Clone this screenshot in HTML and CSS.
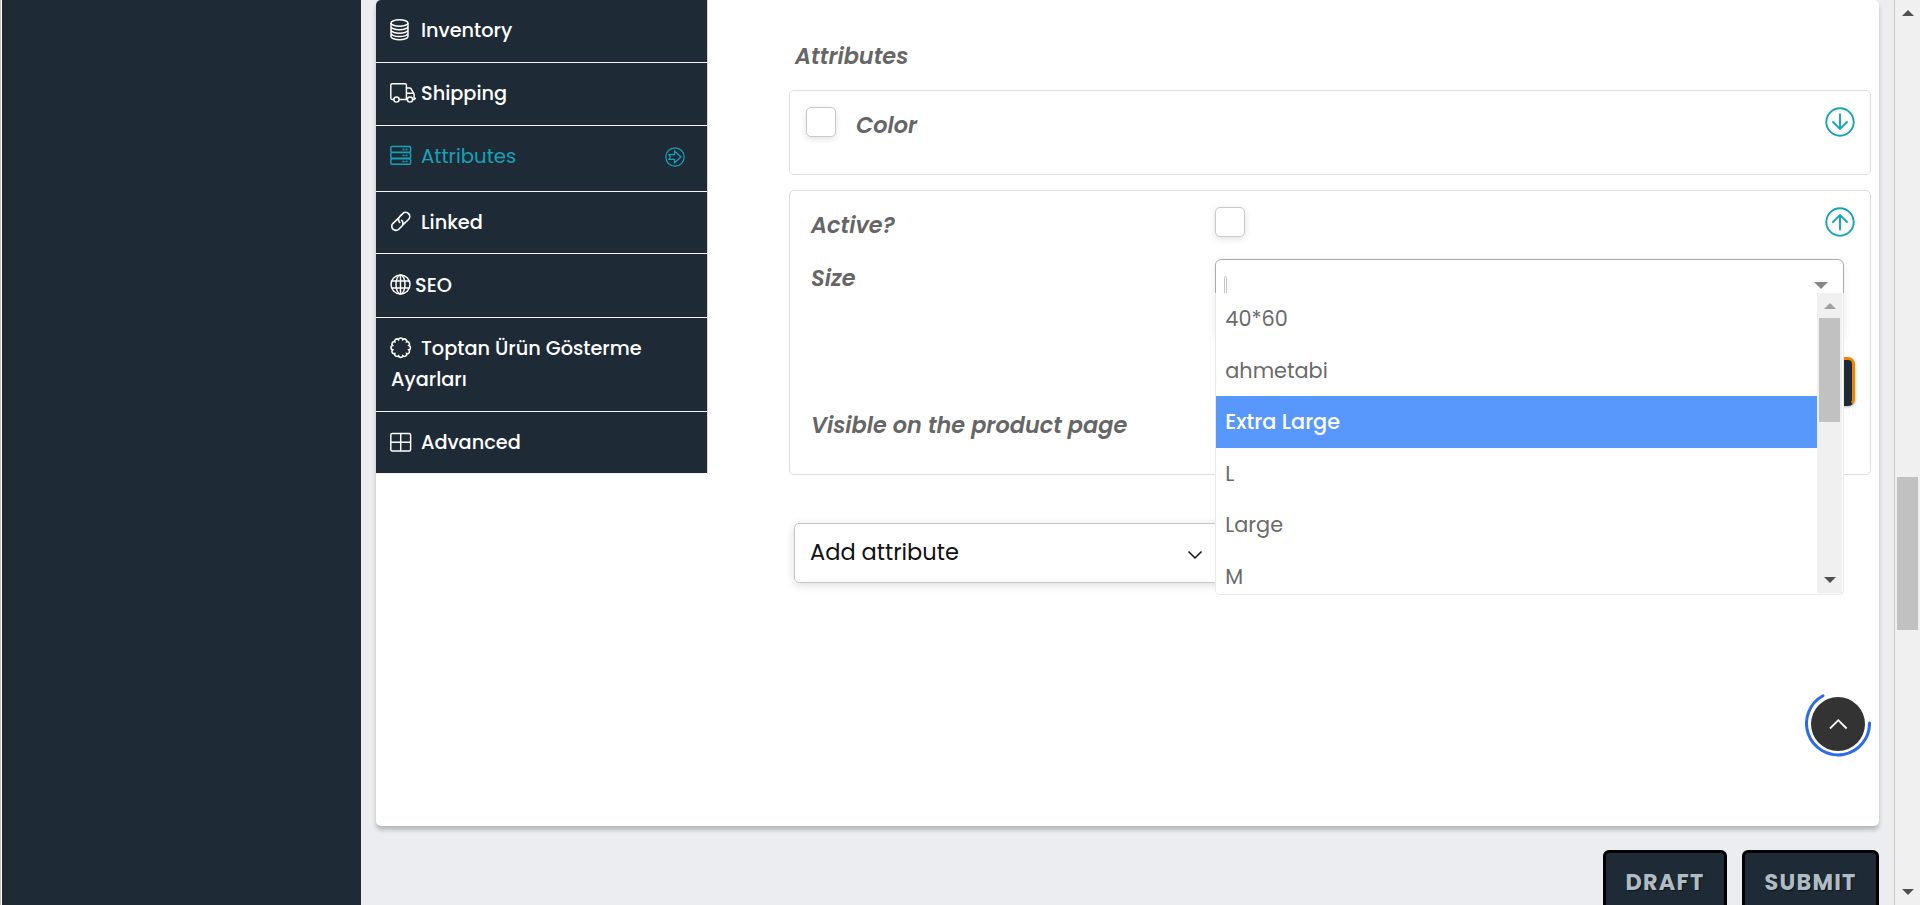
FILE: index.html
```
<!DOCTYPE html>
<html lang="en">
<head>
<meta charset="utf-8">
<title>Product attributes</title>
<link rel="stylesheet" href="styles.css">
</head>
<body>
<div class="app">
  <aside class="sidebar"></aside>
  <main class="page">
    <section class="card">
      <nav class="tabs">
        <a class="tab"><svg class="ico" viewBox="0 0 22 22"><ellipse cx="9.500" cy="4" rx="8.500" ry="3.200"/><path d="M1 4v13.500c0 1.800 3.800 3.200 8.500 3.200s8.500-1.400 8.500-3.200V4M1 7.500c0 1.800 3.800 3.200 8.500 3.200S18 9.300 18 7.500M1 11c0 1.800 3.800 3.200 8.500 3.200S18 12.800 18 11M1 14.300c0 1.800 3.800 3.200 8.500 3.200s8.500-1.400 8.500-3.200"/></svg><span>Inventory</span></a>
        <a class="tab"><svg class="ico truck" viewBox="0 0 26 22"><path d="M4 17.500H2.200A1.500 1.500 0 0 1 .8 16V3.200C.8 2.300 1.300 1.700 2.200 1.700H15c.9 0 1.400.6 1.400 1.500v14.300H9M16.400 6h3.300c.7 0 1 .3 1.400.8l2.600 4.400c.3.400.4.800.4 1.300v5h-2M16.400 11.200h7.200M16.400 17.500h1.200M24 16.500h2"/><circle cx="6.500" cy="17.500" r="2.600"/><circle cx="20" cy="17.500" r="2.600"/></svg><span>Shipping</span></a>
        <a class="tab tall active"><svg class="ico" viewBox="0 0 22 22"><rect x=".8" y="1.500" width="19.800" height="5.600" rx="1.200"/><rect x=".8" y="7.600" width="19.800" height="5.600" rx="1.200"/><rect x=".8" y="13.700" width="19.800" height="5.600" rx="1.200"/><path d="M12.500 4.500h2M15.500 4.500h2M12.500 10.500h2M15.500 10.500h2M12.500 16.500h2M15.500 16.500h2"/></svg><span>Attributes</span><svg class="go" viewBox="0 0 20 20"><circle cx="10" cy="10" r="9.200"/><path d="M4 7.700h5.500V4.200L16 10l-6.500 5.800v-3.500H4l1.300-2.300z"/></svg></a>
        <a class="tab linked"><svg class="ico link" viewBox="0 0 22 22"><path d="M9 6.700 3 12.300a4.100 4.100 0 0 0 5.800 5.900l3-3a4.100 4.100 0 0 0-.6-6.300M12.600 14.200l5.900-5.700a4.100 4.100 0 0 0-5.800-5.900l-3 3a4.100 4.100 0 0 0 .6 6.300"/></svg><span>Linked</span></a>
        <a class="tab seo"><svg class="ico globe" viewBox="0 0 22 22"><circle cx="10.500" cy="10.500" r="9.500"/><ellipse cx="10.500" cy="10.500" rx="4.500" ry="9.500"/><path d="M10.500 1v19M2 7h17M2 14h17"/></svg><span>SEO</span></a>
        <a class="tab wrap"><svg class="ico scallop" viewBox="0 0 22 22"><path transform="translate(10.700 10.700)" d="M8.110 2.170A2.250 2.250 0 0 1 5.940 5.940A2.250 2.250 0 0 1 2.170 8.110A2.250 2.250 0 0 1-2.170 8.110A2.250 2.250 0 0 1-5.940 5.940A2.250 2.250 0 0 1-8.110 2.170A2.250 2.250 0 0 1-8.110-2.170A2.250 2.250 0 0 1-5.940-5.940A2.250 2.250 0 0 1-2.170-8.110A2.250 2.250 0 0 1 2.170-8.110A2.250 2.250 0 0 1 5.940-5.940A2.250 2.250 0 0 1 8.110-2.170A2.250 2.250 0 0 1 8.110 2.170z"/></svg><span>Toptan Ürün Gösterme</span><br><span>Ayarları</span></a>
        <a class="tab last"><svg class="ico" viewBox="0 0 22 22"><rect x=".8" y="1.500" width="19.800" height="17.500" rx="1.500"/><path d="M10.700 1.500V19M.8 10.200h19.800"/></svg><span>Advanced</span></a>
      </nav>
      <div class="content">
        <h2 class="title">Attributes</h2>
        <div class="panel color-panel">
          <span class="check"></span>
          <span class="label">Color</span>
          <svg class="toggle" viewBox="0 0 30 30"><circle cx="15" cy="15" r="13.700"/><path d="M15 7.200v14.500M8 15l7 7 7-7"/></svg>
        </div>
        <div class="panel size-panel">
          <div class="row row-active">
            <span class="label">Active?</span>
            <span class="check"></span>
            <svg class="toggle" viewBox="0 0 30 30"><circle cx="15" cy="15" r="13.700"/><path d="M15 22.500V8M8 15l7-7 7 7"/></svg>
          </div>
          <div class="row row-size">
            <span class="label">Size</span>
            <div class="select">
              <span class="search"></span><span class="caret"></span>
              <div class="dropdown">
                <ul class="options">
                  <li>40*60</li>
                  <li>ahmetabi</li>
                  <li class="on">Extra Large</li>
                  <li>L</li>
                  <li>Large</li>
                  <li>M</li>
                </ul>
                <div class="bar"><i class="up"></i><i class="thumb"></i><i class="down"></i></div>
              </div>
            </div>
          </div>
          <div class="row-button"><span class="btn-add"></span></div>
          <div class="row row-visible"><span class="label">Visible on the product page</span></div>
        </div>
        <div class="add"><span>Add attribute</span><svg class="chev" viewBox="0 0 16 10"><path d="M1.500 1.500 8 8l6.500-6.500"/></svg></div>
      </div>
    </section>
    <div class="actions"><button class="btn draft">DRAFT</button><button class="btn submit">SUBMIT</button></div>
  </main>
  <div class="scroll"><i class="up"></i><i class="thumb"></i><i class="down"></i></div>
  <svg class="totop" viewBox="0 0 66 66"><circle cx="33" cy="33" r="27" fill="#333"/><path class="arc" d="M18 4.700A31.500 31.500 0 1 0 64.500 32"/><path class="tip" d="M25 37.500l8.300-8.300 8.300 8.300"/></svg>
</div>
</body>
</html>
```
FILE: styles.css
```
* { box-sizing: border-box; }
body { margin: 0; overflow: hidden; font-family: Poppins, Inter, "Open Sans", sans-serif; color: #666; }
svg { fill: none; stroke: currentColor; }
.app { display: flex; width: 1920px; height: 905px; overflow: hidden; background: #ecedf1; position: relative; }
.sidebar { width: 361px; flex: none; background: #1e2b36; border-left: 1px solid #c4c4c4; box-shadow: inset 1px 0 #fff; }
.page { flex: 1; padding: 0 15px; }
.card { height: 826px; display: flex; align-items: flex-start; background: #fff; border-radius: 5px; box-shadow: 0 4px 4px rgba(0,0,0,.22); }
.tabs { width: 332px; flex: none; border-right: 1px solid #d3d7da; border-radius: 5px 0 0 0; overflow: hidden; }
.tab { display: block; height: 63px; padding: 15px 14px 0 15px; background: #1e2b36; border-bottom: 1px solid #f2f4f5; color: #fff; font-size: 19.3px; font-weight: 500; line-height: 31px; white-space: nowrap; position: relative; }
.tab.tall { height: 66px; }
.tab.linked { height: 62px; }
.tab.seo { height: 64px; padding-top: 16px; }
.tab.wrap { height: 94px; }
.tab.last { height: 62px; }
.tab.active { color: #17a2b8; font-weight: 400; font-size: 19.7px; }
.ico { width: 22px; height: 22px; margin: 0 9px 0 -1px; vertical-align: -4px; stroke-width: 1.45; }
.tab.last .ico { vertical-align: -5px; }
.truck { width: 26px; margin-right: 5px; }
.globe { margin-right: 3px; }
.link { stroke-width: 1.6; }
.scallop { stroke-width: 1.6; }
.go { position: absolute; right: 22px; top: 21px; width: 20px; height: 20px; stroke-width: 1.2; }
.content { padding: 41px 8px 0 81px; flex: 1; }
.title { margin: 0 0 19px 6px; font: italic 600 22.400px/30px Poppins, Inter, sans-serif; }
.panel { border: 1px solid #dedede; border-radius: 5px; }
.color-panel { height: 85px; display: flex; align-items: flex-start; padding: 16px 16px 0; margin-bottom: 15px; }
.size-panel { height: 285px; padding: 16px 16px 0; }
.label { font-size: 22.400px; line-height: 30px; font-style: italic; font-weight: 600; white-space: nowrap; }
.check { display: block; width: 30px; height: 30px; border: 1px solid #c9c9c9; border-radius: 5px; background: #fff; box-shadow: 0 2px 7px rgba(0,0,0,.12); }
.color-panel .label { margin: 3px auto 0 20px; }
.toggle { width: 30px; height: 30px; color: #17a2b8; stroke-width: 1.9; stroke-linecap: round; flex: none; position: relative; left: .5px; }
.row { display: grid; grid-template-columns: 404px 629px 1fr; padding-left: 5px; }
.row-active { grid-template-columns: 404px 1fr 30px; height: 52px; }
.row-active .label { padding-top: 3px; }
.row-size { height: 98px; }
.row-size .label { padding-top: 4px; }
.select { position: relative; height: 80px; border: 1px solid #aaa; border-radius: 6px; background: #fff; box-shadow: 0 2px 10px rgba(0,0,0,.08); display: flex; justify-content: space-between; padding: 16px 15px 0 8px; }
.search { width: 3px; height: 24px; border: 1px solid #c5c5c5; border-radius: 2px; box-shadow: 2px 2px 6px rgba(0,0,0,.06); }
.caret { width: 0; height: 0; margin-top: 6px; border: 7px solid transparent; border-top-color: #888; border-bottom: 0; }
.dropdown { position: absolute; z-index: 2; left: -1px; top: 33px; width: 629px; height: 302px; padding-right: 1px; display: flex; background: #fff; border: 1px solid #e9e9e9; border-top: 0; border-radius: 0 0 5px 5px; overflow: hidden; }
.options { list-style: none; margin: 0; padding: 0; flex: 1; }
.options li { height: 51.6px; padding-left: 9.300px; font-size: 20.8px; line-height: 51.6px; color: #6a6a6a; }
.options .on { background: #5897fb; color: #fff; font-weight: 500; }
.bar { width: 25px; height: 300px; background: #f0f0f0; display: flex; flex-direction: column; align-items: center; }
.bar .up, .scroll .up { width: 0; height: 0; border: 6px solid transparent; border-top: 0; border-bottom-color: #a0a0a0; margin-top: 10px; }
.bar .thumb { width: 21px; height: 104px; margin-top: 9px; background: #c1c1c1; }
.down { width: 0; height: 0; border: 6px solid transparent; border-bottom: 0; border-top-color: #505050; }
.bar .down { margin: auto 0 10px; }
.row-button { height: 50px; display: flex; justify-content: flex-end; margin-right: -1px; }
.btn-add { width: 110px; height: 49px; background: #1e2b36; border: 3px solid #f28500; border-bottom-color: #1e2b36; border-radius: 7px; box-shadow: 0 1px 3px rgba(0,0,0,.3); }
.row-visible { padding-top: 3px; }
.add { width: 430px; height: 60px; margin: 48px 0 0 5px; padding: 0 20px 2px 15px; border: 1px solid #c6c6c6; border-radius: 5px; box-shadow: 0 2px 10px rgba(0,0,0,.14); display: flex; justify-content: space-between; align-items: center; color: #111; font-size: 22.500px; }
.chev { width: 16px; height: 10px; stroke-width: 1.5; margin-top: 5px; }
.actions { display: flex; justify-content: flex-end; gap: 15px; margin-top: 24px; }
.btn { height: 68px; padding: 0 0 3px; border: 3px solid #000; border-radius: 6px; background: #1e2b36; color: #aebcc5; font: 700 22.400px/59px Poppins, Inter, sans-serif; letter-spacing: 1.2px; text-shadow: 1px 1px 1px #111; }
.draft { width: 124px; }
.submit { width: 137px; }
.scroll { width: 26px; flex: none; background: #f0f0f0; border-left: 1px solid #c8cac9; display: flex; flex-direction: column; align-items: center; }
.scroll .up { border-bottom-color: #505050; }
.scroll .thumb { width: 21px; height: 153px; margin-top: 461px; background: #c1c1c1; }
.scroll .down { margin: auto 0 10px; }
.totop { position: absolute; left: 1805px; top: 691px; width: 66px; height: 66px; }
.totop circle { stroke: none; }
.arc { stroke: #2c6bed; stroke-width: 3; stroke-linecap: round; }
.tip { stroke: #fff; stroke-width: 1.8; }
```
